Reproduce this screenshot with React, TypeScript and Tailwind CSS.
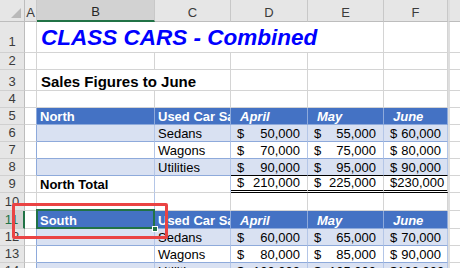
import React from "react";

const G = "border-r border-b border-[#d4d4d4]";
const RH = "bg-[#e6e6e6] border-r border-b border-r-[#bdbdbd] border-b-[#d0d0d0] flex items-end justify-center pb-[1px] text-[#3b3b3b] text-[13px] leading-[15px]";
const CH = "bg-[#e6e6e6] border-r border-b border-r-[#c8c8c8] border-b-[#bdbdbd] flex items-end justify-center pb-[1px] text-[#3b3b3b] text-[13px] leading-[15px]";
const CELL = "flex items-end overflow-hidden whitespace-nowrap text-[13px] leading-[15px] text-black";
const TB = "border-r border-b border-r-[#b4c6e7] border-b-[#8eaadb]";
const GC = "border-l-2 border-l-[#dedede] border-b border-b-[#d4d4d4]";

function Money({ v, band, f, last }: { v: string; band: boolean; f?: boolean; last?: boolean }) {
  return (
    <div
      className={`${CELL} ${band ? "bg-[#d9e1f2]" : "bg-white"} border-r border-r-[#b4c6e7] border-b ${last ? "border-b-black" : "border-b-[#8eaadb]"} justify-between ${f ? "pl-[6px] pr-[6px]" : "pl-[6px] pr-[7px]"}`}
    >
      <span>$</span>
      <span>{v}</span>
    </div>
  );
}

function TableBlock({
  region,
  rows,
  start,
  selected,
}: {
  region: string;
  rows: { label: string; vals: string[] }[];
  start: number;
  selected?: boolean;
}) {
  return (
    <>
      <div className={selected ? "bg-[#d2d2d2] border-r-2 border-r-[#217346] border-b border-b-[#d0d0d0] flex items-end justify-center pb-[1px] text-[#217346] text-[13px] leading-[15px]" : RH}>{start}</div>
      <div className="border-r border-b border-r-[#8eaadb] border-b-[#d4d4d4]" />
      <div className={`${CELL} relative overflow-visible bg-[#4472c4] border-r border-b border-r-[#8eaadb] border-b-[#8eaadb] font-bold text-white pl-[3px]`}>
        {region}
        {selected && (
          <>
            <div className="absolute left-[-1px] top-[-2px] right-[-1px] bottom-[-1px] border-2 border-[#217346]" />
            <div className="absolute right-[-4px] bottom-[-4px] w-[6px] h-[6px] bg-[#217346] border border-white" />
          </>
        )}
      </div>
      <div className={`${CELL} bg-[#4472c4] border-r border-b border-r-[#8eaadb] border-b-[#8eaadb] font-bold text-white pl-[3px]`}>Used Car Sales</div>
      <div className={`${CELL} bg-[#4472c4] border-r border-b border-r-[#8eaadb] border-b-[#8eaadb] font-bold italic text-white pl-[9px]`}>April</div>
      <div className={`${CELL} bg-[#4472c4] border-r border-b border-r-[#8eaadb] border-b-[#8eaadb] font-bold italic text-white pl-[9px]`}>May</div>
      <div className={`${CELL} bg-[#4472c4] border-r border-b border-r-[#8eaadb] border-b-[#8eaadb] font-bold italic text-white pl-[9px]`}>June</div>
      <div className={GC} />
      {rows.map((r, i) => {
        const band = i % 2 === 0;
        const last = i === rows.length - 1 && region === "North";
        return (
          <React.Fragment key={r.label}>
            <div className={RH}>{start + 1 + i}</div>
            <div className="border-r border-b border-r-[#8eaadb] border-b-[#d4d4d4]" />
            <div className={`${band ? "bg-[#d9e1f2]" : "bg-white"} ${TB}`} />
            <div className={`${CELL} ${band ? "bg-[#d9e1f2]" : "bg-white"} ${TB} pl-[3px]`}>{r.label}</div>
            <Money v={r.vals[0]} band={band} last={last} />
            <Money v={r.vals[1]} band={band} last={last} />
            <Money v={r.vals[2]} band={band} f last={last} />
            <div className={GC} />
          </React.Fragment>
        );
      })}
    </>
  );
}

export default function App() {
  return (
    <div className="relative w-[460px] h-[268px] overflow-hidden bg-white font-['Liberation_Sans',Arial,sans-serif]">
      <div className="grid grid-cols-[25px_12px_118px_76px_77px_76px_64px_12px] grid-rows-[22px_31px_17px_21px_17px_17px_17px_17px_17px_17px_18px_18px_17px_17px_17px]">
        {/* header row */}
        <div className="relative bg-[#e6e6e6] border-r border-b border-r-[#bdbdbd] border-b-[#bdbdbd]">
          <div className="absolute right-[3px] bottom-[3px] w-0 h-0 border-l-[10px] border-l-transparent border-b-[10px] border-b-[#b9b9b9]" />
        </div>
        <div className={CH}>A</div>
        <div className="bg-[#d2d2d2] border-r border-r-[#c8c8c8] border-b-2 border-b-[#217346] flex items-end justify-center pb-[1px] text-[#262626] text-[13px] leading-[15px]">B</div>
        <div className={CH}>C</div>
        <div className={CH}>D</div>
        <div className={CH}>E</div>
        <div className={CH}>F</div>
        <div className="bg-[#e6e6e6] border-l-2 border-l-[#dedede] border-b border-b-[#bdbdbd]" />

        {/* row 1 */}
        <div className={`${RH} pb-[3px]`}>1</div>
        <div className={G} />
        <div className={`col-span-4 ${G} flex items-end pb-[2px] pl-[4px] whitespace-nowrap text-[22.5px] leading-[25px] font-bold italic text-[#0000ff]`}>
          CLASS CARS - Combined
        </div>
        <div className={G} />
        <div className={GC} />

        {/* row 2 */}
        <div className={RH}>2</div>
        <div className={G} />
        <div className={G} />
        <div className={G} />
        <div className={G} />
        <div className={G} />
        <div className={G} />
        <div className={GC} />

        {/* row 3 */}
        <div className={RH}>3</div>
        <div className={G} />
        <div className={`col-span-2 ${G} flex items-end pl-[4px] whitespace-nowrap text-[15px] leading-[17px] font-bold text-black`}>
          Sales Figures to June
        </div>
        <div className={G} />
        <div className={G} />
        <div className={G} />
        <div className={GC} />

        {/* row 4 */}
        <div className={RH}>4</div>
        <div className={G} />
        <div className={G} />
        <div className={G} />
        <div className={G} />
        <div className={G} />
        <div className={G} />
        <div className={GC} />

        <TableBlock
          region="North"
          start={5}
          rows={[
            { label: "Sedans", vals: ["50,000", "55,000", "60,000"] },
            { label: "Wagons", vals: ["70,000", "75,000", "80,000"] },
            { label: "Utilities", vals: ["90,000", "95,000", "90,000"] },
          ]}
        />

        {/* row 9 */}
        <div className={RH}>9</div>
        <div className={G} />
        <div className={`${CELL} border-r border-b border-r-[#b4c6e7] border-b-[#d4d4d4] font-bold pl-[3px]`}>North Total</div>
        <div className="border-r border-b border-r-[#b4c6e7] border-b-[#d4d4d4]" />
        <div className={`${CELL} border-r border-r-[#d4d4d4] border-b-[3px] border-double border-b-black justify-between pl-[6px] pr-[7px]`}>
          <span>$</span>
          <span>210,000</span>
        </div>
        <div className={`${CELL} border-r border-r-[#d4d4d4] border-b-[3px] border-double border-b-black justify-between pl-[6px] pr-[7px]`}>
          <span>$</span>
          <span>225,000</span>
        </div>
        <div className={`${CELL} border-r border-r-[#d4d4d4] border-b-[3px] border-double border-b-black justify-between pl-[6px] pr-[6px]`}>
          <span>$</span>
          <span>230,000</span>
        </div>
        <div className={GC} />

        {/* row 10 */}
        <div className={RH}>10</div>
        <div className={G} />
        <div className="border-r border-b border-r-[#b4c6e7] border-b-[#d4d4d4]" />
        <div className={G} />
        <div className={G} />
        <div className={G} />
        <div className={G} />
        <div className={GC} />

        <TableBlock
          region="South"
          start={11}
          selected
          rows={[
            { label: "Sedans", vals: ["60,000", "65,000", "70,000"] },
            { label: "Wagons", vals: ["80,000", "85,000", "90,000"] },
            { label: "Utilities", vals: ["100,000", "105,000", "100,000"] },
          ]}
        />
      </div>

      {/* red highlight box */}
      <div className="absolute left-[12px] top-[203px] w-[156px] h-[36px] border-[3px] border-[#ea4343] rounded-[2px] pointer-events-none" />
    </div>
  );
}
